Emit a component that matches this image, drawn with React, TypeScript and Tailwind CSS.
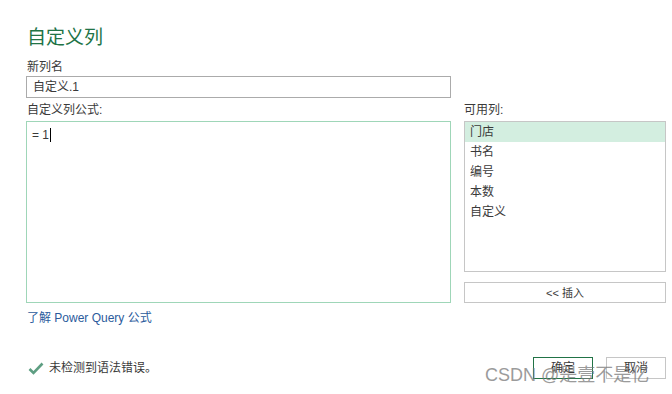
import React from "react";

const items = ["门店", "书名", "编号", "本数", "自定义"];

export default function App() {
  return (
    <div
      className="relative w-[672px] h-[394px] bg-white text-[#3a3a3a] text-[12px] overflow-hidden"
      style={{ fontFamily: '"Liberation Sans", "Noto Sans CJK SC", sans-serif' }}
    >
      <div className="flex flex-col w-[640px] ml-[26px] pt-[24px]">
        <div className="h-[28px] leading-[28px] text-[19px] text-[#217346] pl-[1px]">自定义列</div>
        <div className="mt-[7px] h-[16px] leading-[16px] pl-[1px]">新列名</div>
        <div className="mt-[1px] w-[425px] h-[22px] border border-[#ababab] flex items-center pl-[6px] leading-[16px]">
          自定义.1
        </div>
        <div className="flex mt-[4px]">
          <div className="w-[425px] flex flex-col">
            <div className="h-[16px] leading-[16px] pl-[1px]">自定义列公式:</div>
            <div className="mt-[3px] h-[182px] border border-[#9fd6b8] pl-[5px] pt-[5px]">
              <div className="flex items-center h-[16px] leading-[16px]">
                <span>= 1</span>
                <span className="ml-[1px] w-[1px] h-[14px] bg-black" />
              </div>
            </div>
          </div>
          <div className="ml-[13px] w-[202px] flex flex-col">
            <div className="h-[16px] leading-[16px]">可用列:</div>
            <div className="mt-[3px] h-[151px] border border-[#c6c6c6] flex flex-col">
              {items.map((it, i) => (
                <div
                  key={it}
                  className={
                    i === 0
                      ? "h-[20px] leading-[21px] pl-[5px] bg-[#d3eee0]"
                      : "h-[20px] leading-[21px] pl-[5px]"
                  }
                >
                  {it}
                </div>
              ))}
            </div>
            <div className="mt-[10px] h-[21px] border border-[#c6c6c6] flex items-center justify-center text-[11px] leading-[14px]">
              &lt;&lt; 插入
            </div>
          </div>
        </div>
        <div className="mt-[7px] h-[16px] leading-[16px] pl-[1px] text-[#2b5b9c]">了解 Power Query 公式</div>
        <div className="mt-[31px] h-[22px] flex items-center">
          <svg width="16" height="13" viewBox="0 0 16 13" className="ml-[2px]">
            <polyline
              points="1.5,7 5.5,11 14.5,1.5"
              fill="none"
              stroke="#5e9e82"
              strokeWidth="2.6"
            />
          </svg>
          <span className="ml-[5px] text-[12px] leading-[16px]">未检测到语法错误。</span>
          <div className="ml-auto flex">
            <div className="w-[60px] h-[22px] border border-[#217346] flex items-center justify-center leading-[16px]">
              确定
            </div>
            <div className="ml-[13px] w-[60px] h-[22px] border border-[#c6c6c6] flex items-center justify-center leading-[16px]">
              取消
            </div>
          </div>
        </div>
      </div>
      <div
        className="absolute left-[485px] top-[363px] text-[18px] leading-[24px] text-[#7a7a7a] opacity-75 whitespace-nowrap"
        style={{ fontFamily: '"Liberation Sans", "Noto Sans CJK SC", sans-serif' }}
      >
        CSDN @是壹不是亿
      </div>
    </div>
  );
}
